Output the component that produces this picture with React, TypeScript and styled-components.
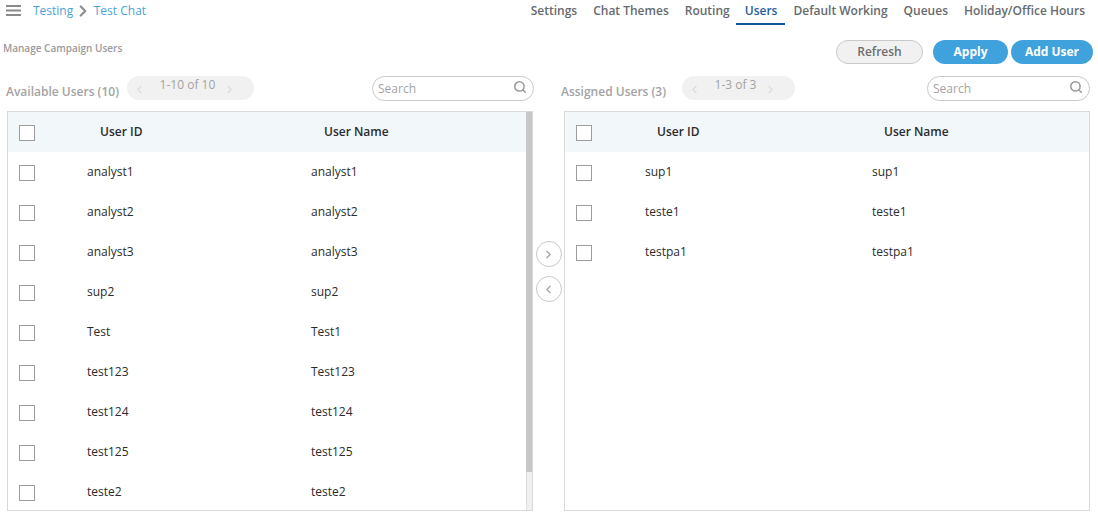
import React from 'react';
import styled, { createGlobalStyle } from 'styled-components';
import { ChevronLeft, ChevronRight, Search } from 'lucide-react';

const GlobalStyle = createGlobalStyle`
  html, body {
    margin: 0;
    padding: 0;
    background: #fff;
    font-family: "Open Sans", "Liberation Sans", sans-serif;
    overflow: hidden;
  }
  * {
    box-sizing: border-box;
  }
`;

const Page = styled.div`
  width: 1098px;
  height: 517px;
  display: flex;
  flex-direction: column;
`;

const TopBar = styled.header`
  height: 25px;
  display: flex;
  justify-content: space-between;
  padding: 0 5px 0 6px;
`;

const Crumbs = styled.div`
  display: flex;
  align-items: center;
  height: 21px;
  font-size: 12px;
  color: #4ba3dc;
`;

const MenuIcon = styled.svg`
  width: 15px;
  height: 11px;
  margin-right: 12px;
  fill: #8a8a8a;
`;

const CrumbArrow = styled(ChevronRight)`
  width: 18px;
  height: 18px;
  margin: 0 1.5px 0 1px;
  color: #8f8f8f;
  stroke-width: 3;
`;

const Tabs = styled.nav`
  display: flex;
`;

const Tab = styled.a<{ $active?: boolean }>`
  height: 25px;
  padding: 0 8px 0 ${(p) => (p.$active ? '9px' : '8px')};
  margin-left: ${(p) => (p.$active ? '-2px' : '0')};
  line-height: 21px;
  font-size: 12px;
  font-weight: 600;
  white-space: nowrap;
  color: ${(p) => (p.$active ? '#1f5f9e' : '#666a6e')};
  border-bottom: 2px solid ${(p) => (p.$active ? '#13589c' : 'transparent')};
`;

const ActionRow = styled.div`
  height: 51px;
  display: flex;
  justify-content: space-between;
  padding: 15px 5px 0 3px;
`;

const PageTitle = styled.div`
  font-size: 10px;
  font-weight: 600;
  line-height: 17px;
  color: #9a9a9a;
`;

const Actions = styled.div`
  display: flex;
  gap: 3px;
`;

const Button = styled.button<{ $primary?: boolean; $width: number }>`
  width: ${(p) => p.$width}px;
  height: 24px;
  padding: 0 0 2px;
  border-radius: 12px;
  font-family: inherit;
  font-size: 12px;
  font-weight: ${(p) => (p.$primary ? 700 : 600)};
  color: ${(p) => (p.$primary ? '#fff' : '#6d6d6d')};
  background: ${(p) => (p.$primary ? '#3fa2dc' : '#f1f1f1')};
  border: ${(p) => (p.$primary ? 'none' : '1px solid #c9c9c9')};
  margin-right: ${(p) => (p.$primary ? '0' : '7px')};
`;

const Columns = styled.div`
  display: grid;
  grid-template-columns: 526px 31px 526px;
  padding-left: 7px;
`;

const Column = styled.section`
  display: flex;
  flex-direction: column;
`;

const ColumnHead = styled.div`
  height: 35px;
  display: flex;
  align-items: flex-start;
`;

const ColumnLabel = styled.div<{ $offset: number }>`
  margin: 7px 0 0 ${(p) => p.$offset}px;
  font-size: 12px;
  font-weight: 600;
  line-height: 18px;
  color: #a3a3a3;
  white-space: nowrap;
`;

const Pager = styled.div<{ $width: number; $gap: number }>`
  width: ${(p) => p.$width}px;
  height: 24px;
  margin-left: ${(p) => p.$gap}px;
  padding: 0 18px 0 6px;
  border-radius: 12px;
  background: #f1f1f1;
  display: flex;
  justify-content: space-between;
  align-items: center;
  font-size: 12px;
  line-height: 15px;
  color: #a3a3a3;
`;

const PagerText = styled.span`
  margin: 0 0 8px 6px;
`;

const PagerArrow = styled.span`
  display: flex;
  color: #dcdcdc;
  margin-top: 2px;
`;

const SearchBox = styled.div<{ $width: number; $overhang: number }>`
  width: ${(p) => p.$width}px;
  height: 25px;
  margin-left: auto;
  margin-right: ${(p) => -p.$overhang}px;
  padding: 0 6px 0 5px;
  display: flex;
  align-items: center;
  border: 1px solid #c9c9c9;
  border-radius: 13px;
  background: #fff;
`;

const SearchInput = styled.input`
  flex: 1;
  min-width: 0;
  border: none;
  outline: none;
  padding: 0;
  background: transparent;
  font-family: inherit;
  font-size: 12px;
  color: #666;
  &::placeholder {
    color: #a3a3a3;
    opacity: 1;
  }
`;

const SearchIcon = styled(Search)`
  width: 14px;
  height: 14px;
  color: #9a9a9a;
  stroke-width: 2.6;
  margin-bottom: 3px;
`;

const Panel = styled.div`
  height: 400px;
  display: flex;
  border: 1px solid #d9d9d9;
`;

const Table = styled.div`
  flex: 1;
  min-width: 0;
  overflow: hidden;
`;

const Row = styled.div<{ $head?: boolean; $leadWidth: number; $idWidth: number; $headIndent: number }>`
  height: 40px;
  display: grid;
  grid-template-columns: ${(p) => p.$leadWidth}px ${(p) => p.$idWidth}px 1fr;
  align-items: center;
  padding-bottom: 1px;
  font-size: 12px;
  color: #2b2b2b;
  background: ${(p) => (p.$head ? '#f2f7fa' : '#fff')};
  font-weight: ${(p) => (p.$head ? 600 : 400)};
  & > span {
    padding-left: ${(p) => (p.$head ? p.$headIndent : 0)}px;
  }
`;

const Checkbox = styled.div`
  width: 16px;
  height: 16px;
  margin: 3px 0 0 11px;
  border: 1px solid #9c9c9c;
  background: #fff;
`;

const ScrollBar = styled.div`
  width: 6px;
  background: #efefef;
  border-left: 1px solid #dedede;
`;

const ScrollThumb = styled.div`
  height: 360px;
  margin-left: -1px;
  width: 6px;
  background: #c8c8c8;
`;

const Movers = styled.div`
  display: flex;
  flex-direction: column;
  align-items: center;
  gap: 9px;
  padding-top: 165px;
`;

const MoveButton = styled.button`
  width: 26px;
  height: 26px;
  padding: 0;
  border-radius: 50%;
  border: 1px solid #c9c9c9;
  background: #fff;
  color: #a8a8a8;
  display: flex;
  align-items: center;
  justify-content: center;
`;

type User = [string, string];

const available: User[] = [
  ['analyst1', 'analyst1'],
  ['analyst2', 'analyst2'],
  ['analyst3', 'analyst3'],
  ['sup2', 'sup2'],
  ['Test', 'Test1'],
  ['test123', 'Test123'],
  ['test124', 'test124'],
  ['test125', 'test125'],
  ['teste2', 'teste2'],
];

const assigned: User[] = [
  ['sup1', 'sup1'],
  ['teste1', 'teste1'],
  ['testpa1', 'testpa1'],
];

const tabs = ['Settings', 'Chat Themes', 'Routing', 'Users', 'Default Working', 'Queues', 'Holiday/Office Hours'];

interface ListProps {
  label: string;
  labelOffset: number;
  range: string;
  pagerWidth: number;
  pagerGap: number;
  searchWidth: number;
  searchOverhang: number;
  users: User[];
  leadWidth: number;
  idWidth: number;
  headIndent: number;
  scroll?: boolean;
}

const UserList: React.FC<ListProps> = ({
  label,
  labelOffset,
  range,
  pagerWidth,
  pagerGap,
  searchWidth,
  searchOverhang,
  users,
  leadWidth,
  idWidth,
  headIndent,
  scroll,
}) => (
  <Column>
    <ColumnHead>
      <ColumnLabel $offset={labelOffset}>{label}</ColumnLabel>
      <Pager $width={pagerWidth} $gap={pagerGap}>
        <PagerArrow><ChevronLeft size={13} /></PagerArrow>
        <PagerText>{range}</PagerText>
        <PagerArrow><ChevronRight size={13} /></PagerArrow>
      </Pager>
      <SearchBox $width={searchWidth} $overhang={searchOverhang}>
        <SearchInput placeholder="Search" />
        <SearchIcon />
      </SearchBox>
    </ColumnHead>
    <Panel>
      <Table>
        <Row $head $leadWidth={leadWidth} $idWidth={idWidth} $headIndent={headIndent}>
          <Checkbox />
          <span>User ID</span>
          <span>User Name</span>
        </Row>
        {users.map(([id, name]) => (
          <Row key={id} $leadWidth={leadWidth} $idWidth={idWidth} $headIndent={headIndent}>
            <Checkbox />
            <span>{id}</span>
            <span>{name}</span>
          </Row>
        ))}
      </Table>
      {scroll && (
        <ScrollBar>
          <ScrollThumb />
        </ScrollBar>
      )}
    </Panel>
  </Column>
);

const App: React.FC = () => (
  <Page>
    <GlobalStyle />
    <TopBar>
      <Crumbs>
        <MenuIcon viewBox="0 0 15 11">
          <rect x="0" y="0" width="15" height="2" />
          <rect x="0" y="4.5" width="15" height="2" />
          <rect x="0" y="9" width="15" height="2" />
        </MenuIcon>
        Testing
        <CrumbArrow />
        Test Chat
      </Crumbs>
      <Tabs>
        {tabs.map((tab) => (
          <Tab key={tab} $active={tab === 'Users'}>{tab}</Tab>
        ))}
      </Tabs>
    </TopBar>
    <ActionRow>
      <PageTitle>Manage Campaign Users</PageTitle>
      <Actions>
        <Button $width={87}>Refresh</Button>
        <Button $primary $width={75}>Apply</Button>
        <Button $primary $width={82}>Add User</Button>
      </Actions>
    </ActionRow>
    <Columns>
      <UserList
        label="Available Users (10)"
        labelOffset={-1}
        range="1-10 of 10"
        pagerWidth={127}
        pagerGap={8}
        searchWidth={162}
        searchOverhang={1}
        users={available}
        leadWidth={79}
        idWidth={224}
        headIndent={13}
        scroll
      />
      <Movers>
        <MoveButton><ChevronRight size={13} strokeWidth={2.6} /></MoveButton>
        <MoveButton><ChevronLeft size={13} strokeWidth={2.6} /></MoveButton>
      </Movers>
      <UserList
        label="Assigned Users (3)"
        labelOffset={-3}
        range="1-3 of 3"
        pagerWidth={113}
        pagerGap={16}
        searchWidth={163}
        searchOverhang={0}
        users={assigned}
        leadWidth={80}
        idWidth={227}
        headIndent={12}
      />
    </Columns>
  </Page>
);

export default App;
